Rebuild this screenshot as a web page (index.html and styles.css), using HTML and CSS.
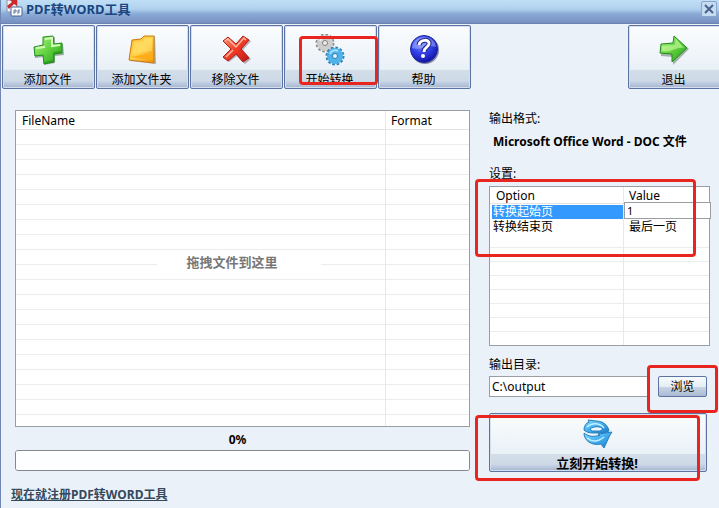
FILE: index.html
```html
<!DOCTYPE html>
<html lang="zh-CN">
<head>
    <meta charset="UTF-8">
    <meta name="viewport" content="width=device-width, initial-scale=1.0">
    <title>PDF转WORD工具</title>
    <link rel="stylesheet" href="styles.css">
</head>
<body>
    <header class="titlebar">
        <svg class="logo" width="18" height="18" viewBox="0 0 18 18">
            <path d="M1 0h10v12H1z" fill="#f4f2f6" stroke="#8d91ad"/>
            <path d="M1 6L6 2 4 0h7v6L8 4 3 9z" fill="#c92b2b"/>
            <rect x="5" y="7" width="11" height="9" rx="1" fill="#fff" stroke="#486395"/>
            <path d="M8 14v-4h2v2H8M12 14v-4h2M12 12h2" fill="none" stroke="#607aa8"/>
        </svg>
        <h1>PDF转WORD工具</h1>
        <button class="close" aria-label="关闭">
            <svg width="12" height="10" viewBox="0 0 12 10"><path d="M2 1l8 8M10 1L2 9" stroke="#47618f" stroke-width="2"/></svg>
        </button>
    </header>

    <nav class="toolbar">
        <button class="tool">
            <svg width="32" height="32" viewBox="0 0 32 32">
                <defs>
                    <linearGradient id="green" x1="0" y1="0" x2="1" y2="1">
                        <stop offset="0" stop-color="#b6f58c"/><stop offset=".5" stop-color="#62d23f"/><stop offset="1" stop-color="#25991c"/>
                    </linearGradient>
                </defs>
                <path d="M12 4l11-1v8l8-1 1 11-9 1v7l-11 2-1-8-8 1-1-11 10-1z" fill="#7c8f83" opacity=".7"/>
                <path d="M11 3l10-1 1 8 8-1v10l-8 1v8l-10 2-1-9-8 1-1-9 9-2z" fill="url(#green)" stroke="#218c1c"/>
                <path d="M13 5l7-1v8l8-1M4 14l9-1z" fill="none" stroke="#d4ffb8" stroke-width="2"/>
                <path d="M12 28l9-2v-8l8-1v2l-7 1v8l-10 2z" fill="#1f921b" opacity=".6"/>
            </svg>
            <span>添加文件</span>
        </button>
        <button class="tool">
            <svg width="32" height="32" viewBox="0 0 32 32">
                <defs>
                    <linearGradient id="gold" x1="0" y1="0" x2="1" y2="1">
                        <stop offset="0" stop-color="#ffb92b"/><stop offset=".5" stop-color="#ffd24a"/><stop offset="1" stop-color="#f08c05"/>
                    </linearGradient>
                </defs>
                <path d="M6 7l10-2 2-2 11-1 1 28-26-3z" fill="#8d8472" opacity=".6"/>
                <path d="M6 6l9-1 3-3h10v27L3 26z" fill="url(#gold)" stroke="#c97c0b"/>
                <path d="M8 8l9-1 2-3h7v13L6 20z" fill="#ffe576" opacity=".5"/>
                <path d="M4 23l23 3v-7z" fill="#ffab18"/>
            </svg>
            <span>添加文件夹</span>
        </button>
        <button class="tool">
            <svg width="32" height="32" viewBox="0 0 32 32">
                <defs>
                    <linearGradient id="red" x1="0" y1="0" x2="1" y2="1">
                        <stop offset="0" stop-color="#ff9a7c"/><stop offset=".5" stop-color="#f13b25"/><stop offset="1" stop-color="#bd1811"/>
                    </linearGradient>
                </defs>
                <path d="M4 8l5-4 8 7 8-8 6 4-8 9 8 9-6 5-8-8-8 6-6-4 9-9z" fill="#8a7f88" opacity=".6"/>
                <path d="M3 7l5-4 8 7 7-8 6 4-8 9 8 9-6 4-7-8-8 7-5-4 8-8z" fill="url(#red)" stroke="#a91f19"/>
                <path d="M5 7l3-2 8 8 8-9 2 2M6 23l7-7" fill="none" stroke="#ffb7a0" stroke-width="1.500"/>
            </svg>
            <span>移除文件</span>
        </button>
        <button class="tool marked">
            <svg width="32" height="32" viewBox="0 0 32 32">
                <g fill="none">
                    <circle cx="11" cy="9" r="8" stroke="#8b8c91" stroke-width="3" stroke-dasharray="2.500 1.700"/>
                    <circle cx="11" cy="9" r="5" stroke="#cfcecd" stroke-width="6"/>
                    <circle cx="11" cy="9" r="2.500" fill="#eee" stroke="#817f80"/>
                    <path d="M6 7c1-3 5-5 8-3" stroke="#f2f1ef" stroke-width="2"/>
                    <circle cx="21" cy="22" r="8" stroke="#2b82b5" stroke-width="3" stroke-dasharray="2.500 1.700"/>
                    <circle cx="21" cy="22" r="5" stroke="#4fb3ea" stroke-width="6"/>
                    <circle cx="21" cy="22" r="2.500" fill="#e7f5fc" stroke="#287db3"/>
                    <path d="M16 20c1-3 5-5 8-3" stroke="#a6e1ff" stroke-width="2"/>
                </g>
            </svg>
            <span>开始转换</span>
        </button>
        <button class="tool">
            <svg width="32" height="32" viewBox="0 0 32 32">
                <defs>
                    <radialGradient id="blue" cx=".4" cy=".3" r=".7">
                        <stop offset="0" stop-color="#8b9bff"/><stop offset=".5" stop-color="#3444ed"/><stop offset="1" stop-color="#1114a8"/>
                    </radialGradient>
                </defs>
                <circle cx="17" cy="16" r="14" fill="#8186a9"/>
                <circle cx="16" cy="15" r="13.500" fill="url(#blue)" stroke="#242797"/>
                <path d="M4 14C5 0 27 0 28 13 20 10 12 17 4 14z" fill="#a7b5ff" opacity=".5"/>
                <path d="M11 11c1-6 11-6 10-1-1 4-5 3-5 8" fill="none" stroke="#20238c" stroke-width="5"/>
                <path d="M11 11c1-6 11-6 10-1-1 4-5 3-5 8" fill="none" stroke="#fff" stroke-width="3"/>
                <circle cx="15" cy="22" r="2" fill="#fff"/>
            </svg>
            <span>帮助</span>
        </button>
        <button class="tool exit">
            <svg width="32" height="32" viewBox="0 0 32 32">
                <path d="M3 12l13-1 1-8 14 12-16 16v-8L3 22z" fill="#6e8671" opacity=".6"/>
                <path d="M3 10l12-1 1-7 13 12-15 14v-8L2 19z" fill="url(#green)" stroke="#238921"/>
                <path d="M4 12l13-1 1-6 8 9c-7-2-13 5-22 3z" fill="#c2f999" opacity=".65"/>
            </svg>
            <span>退出</span>
        </button>
    </nav>

    <main class="content">
        <section class="files">
            <div class="list">
                <table class="file-table">
                    <thead>
                        <tr><th>FileName</th><th>Format</th></tr>
                    </thead>
                    <tbody>
                        <tr class="blank"><td></td><td></td></tr>
                    </tbody>
                </table>
                <p class="drop-hint">拖拽文件到这里</p>
            </div>
            <label class="percent" for="progress">0%</label>
            <progress id="progress" value="0" max="100"></progress>
            <a class="register" href="#">现在就注册PDF转WORD工具</a>
        </section>

        <section class="settings">
            <h2>输出格式:</h2>
            <p class="format">Microsoft Office Word - DOC 文件</p>
            <h2>设置:</h2>
            <div class="options marked">
                <table class="option-table">
                    <thead>
                        <tr><th>Option</th><th>Value</th></tr>
                    </thead>
                    <tbody>
                        <tr class="selected">
                            <td><label for="start">转换起始页</label></td>
                            <td class="editing"><input id="start" type="text" value="1"></td>
                        </tr>
                        <tr><td>转换结束页</td><td>最后一页</td></tr>
                        <tr class="blank"><td></td><td></td></tr>
                    </tbody>
                </table>
            </div>
            <label class="dir-label" for="output">输出目录:</label>
            <div class="directory">
                <input id="output" type="text" value="C:\output">
                <div class="browse-wrap marked"><button class="browse">浏览</button></div>
            </div>
            <div class="convert-wrap marked">
                <button class="tool convert">
                    <svg width="32" height="32" viewBox="0 0 32 32">
                        <defs>
                            <linearGradient id="sky" x1="0" y1="0" x2="1" y2="1">
                                <stop offset="0" stop-color="#8cdbff"/><stop offset=".5" stop-color="#43aef0"/><stop offset="1" stop-color="#1879c8"/>
                            </linearGradient>
                        </defs>
                        <path d="M3 12c0-4 2-7 5-8l-1-2 8 1c7 0 12 4 13 10l-5 2H12c-4 0-7-1-9-3z" fill="url(#sky)" stroke="#287eb8"/>
                        <path d="M9 11c4-3 10-3 13 0l-3 2h-8z" fill="#eef7fc" stroke="#287eb8"/>
                        <path d="M3 15c5 4 10 4 16 2l-2-1 14-2-2 3-6 13-3-4C11 28 3 23 3 15z" fill="url(#sky)" stroke="#287eb8"/>
                        <path d="M6 9c5-5 13-4 17 1M6 20c5 4 11 4 17-1" fill="none" stroke="#c3f0ff" stroke-width="1.500"/>
                    </svg>
                    <span>立刻开始转换!</span>
                </button>
            </div>
        </section>
    </main>
</body>
</html>
```
FILE: styles.css
```css
* {
    box-sizing: border-box;
}
body {
    margin: 0;
    min-height: 100vh;
    overflow: hidden;
    border-left: 1px solid #7186b2;
    background-color: #ebf1f8;
    color: #000;
    font-family: "Noto Sans", "Noto Sans CJK SC", sans-serif;
    font-size: 12px;
    line-height: 16px;
}
h1, h2, p {
    margin: 0;
}
button, input {
    font: inherit;
    color: inherit;
}
svg {
    display: block;
}
.titlebar {
    display: flex;
    align-items: center;
    height: 24px;
    padding: 0 2px 0 5px;
    background: linear-gradient(#c0def5, #b0d0ee 40%, #8baad5 60%, #7690c1);
    border-bottom: 1px solid #6c83b2;
}
.titlebar h1 {
    flex: 1;
    margin-left: 2px;
    padding-bottom: 5px;
    font-size: 13px;
    color: #194681;
}
.logo {
    margin-bottom: 6px;
}
.close {
    display: grid;
    place-items: center;
    width: 16px;
    height: 16px;
    margin-bottom: 6px;
    padding: 0;
    border: 1px solid #8ba6ce;
    border-radius: 2px;
    background: #c5dbf0;
}
.toolbar {
    display: flex;
    gap: 1px;
    margin-right: -2px;
    padding: 1px 0 0 1px;
}
.tool {
    display: flex;
    flex-direction: column;
    align-items: center;
    justify-content: space-between;
    width: 93px;
    height: 64px;
    padding: 8px 2px 0 0;
    border: 1px solid #5c74a3;
    border-radius: 2px;
    background: linear-gradient(#fbfdfe, #e9f0f7 70%, #d3deea 71%, #ced9e7 88%, #a3b4d1);
    box-shadow: inset 0 0 0 1px #d5dfec;
}
.exit {
    margin-left: auto;
}
/* red frames that point out each step */
.marked {
    position: relative;
}
.marked::after {
    content: "";
    position: absolute;
    border: 3px solid #e8251f;
    border-radius: 4px;
    pointer-events: none;
    z-index: 1;
}
.tool.marked::after {
    inset: 10px -2px 3px 14px;
}
.content {
    display: grid;
    grid-template-columns: minmax(0, 1fr) 221px;
    gap: 19px;
    padding: 21px 9px 0 14px;
}
.list {
    position: relative;
    height: 317px;
    border: 1px solid #9a9da2;
    background: #fff;
}
table {
    width: 100%;
    height: 100%;
    table-layout: fixed;
    border-collapse: separate;
    border-spacing: 0;
}
th, td {
    padding: 0 6px;
    text-align: left;
    font-weight: normal;
    white-space: nowrap;
}
th + th, td + td {
    border-left: 1px solid #e8e8e8;
    padding-left: 5px;
}
th {
    border-bottom: 1px solid #e3e3e3;
}
.blank {
    height: 100%;
}
.file-table th {
    height: 19px;
    padding-top: 2px;
}
.file-table th + th {
    width: 84px;
}
.file-table .blank td {
    background: repeating-linear-gradient(#fff 0 14px, #ececec 14px 15px);
}
.drop-hint {
    position: absolute;
    top: 143px;
    left: 141px;
    width: 164px;
    padding-right: 14px;
    background: #fff;
    color: #777;
    font-size: 13px;
    font-weight: bold;
    text-align: center;
}
.percent {
    display: block;
    height: 23px;
    padding: 5px 10px 0 0;
    font-weight: bold;
    text-align: center;
}
progress {
    display: block;
    width: 100%;
    height: 21px;
    appearance: none;
    border: 1px solid #85878c;
    border-radius: 3px;
    background: #fdfeff;
    overflow: hidden;
}
progress::-webkit-progress-bar {
    background: #fdfeff;
}
.register {
    display: inline-block;
    margin: 16px 0 0 -4px;
    color: #34495c;
    font-weight: bold;
}
.settings h2, .dir-label {
    display: block;
    padding-top: 1px;
    font-size: 12px;
    font-weight: normal;
}
.format {
    margin: 7px 0 15px;
    padding-left: 4px;
    font-weight: bold;
    white-space: nowrap;
}
.options {
    height: 160px;
    margin-top: 4px;
    border: 1px solid #9a9da2;
    background: #fff;
}
.options::after {
    inset: -8px 13px 88px -15px;
}
.option-table th {
    height: 17px;
    padding-top: 2px;
    line-height: 14px;
}
.option-table th + th {
    width: 86px;
}
.option-table td {
    height: 15px;
    padding-left: 3px;
    line-height: 15px;
}
.option-table td + td {
    padding-left: 5px;
}
.option-table .blank td {
    background: repeating-linear-gradient(#fff 0 13px, #ececec 13px 14px);
}
.selected label {
    display: block;
    color: #fff;
}
.selected td:first-child {
    background: linear-gradient(#3399ff, #3399ff) 2px 1px no-repeat;
}
.editing {
    position: relative;
}
.editing input {
    position: absolute;
    inset: -2px -2px 0 0;
    width: 87px;
    padding: 0 2px;
    border: 1px solid #9a9da2;
    background: #fff;
    font-size: 11px;
}
.dir-label {
    margin: 10px 0 3px;
}
.directory {
    display: flex;
    gap: 9px;
    height: 21px;
}
.directory > input {
    flex: 1;
    min-width: 0;
    padding: 0 2px;
    border: 1px solid #9a9da2;
    background: #fff;
}
.browse-wrap {
    padding-right: 3px;
}
.browse-wrap::after {
    inset: -11px -8px -16px -11px;
}
.browse {
    display: block;
    width: 49px;
    height: 21px;
    padding: 0;
    border: 1px solid #5c74a3;
    border-radius: 2px;
    background: linear-gradient(#f8fbfd, #e5edf5 50%, #cad6e5 51%, #abbad3);
}
.convert-wrap {
    margin-top: 16px;
    padding-right: 3px;
}
.convert-wrap::after {
    inset: 2px 10px -9px -14px;
}
.convert {
    width: 100%;
    height: 59px;
    padding-top: 4px;
    font-size: 13px;
    font-weight: bold;
}
```
